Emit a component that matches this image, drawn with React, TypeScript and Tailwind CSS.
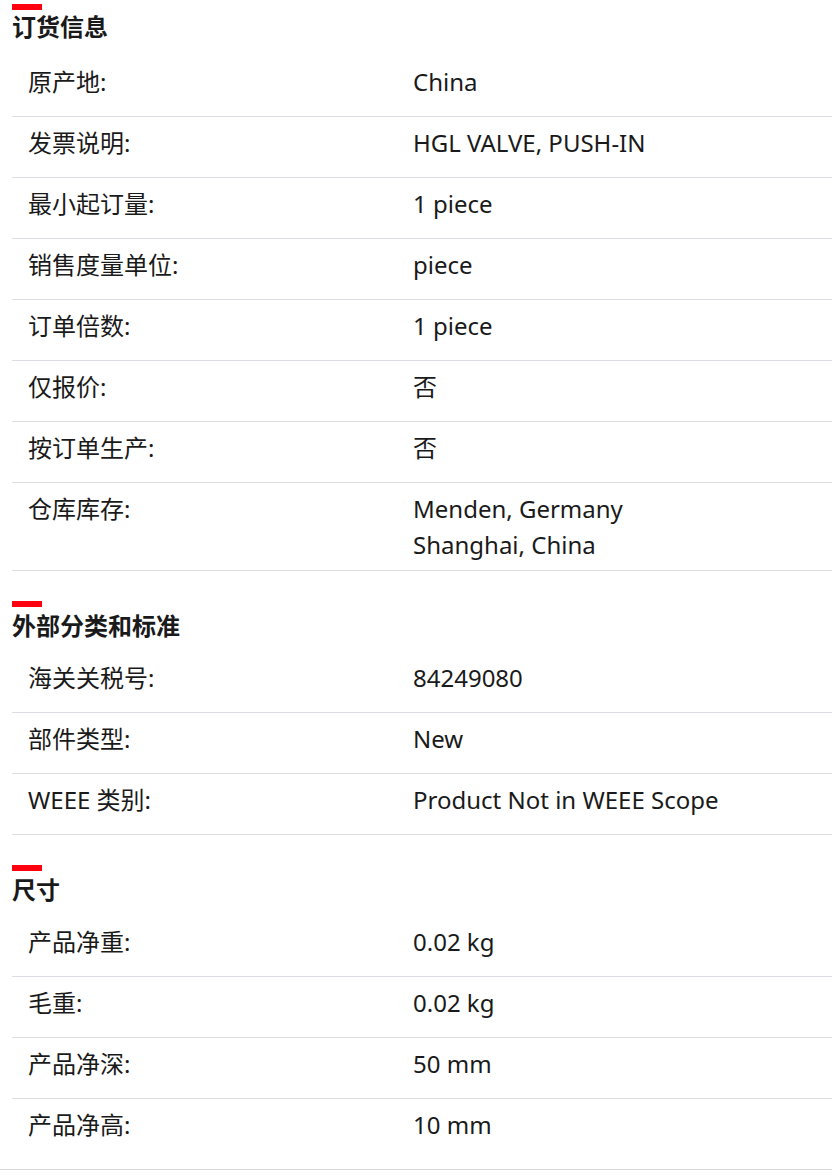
const sections = [
  {
    title: "订货信息",
    rows: [
      { label: "原产地:", value: ["China"] },
      { label: "发票说明:", value: ["HGL VALVE, PUSH-IN"] },
      { label: "最小起订量:", value: ["1 piece"] },
      { label: "销售度量单位:", value: ["piece"] },
      { label: "订单倍数:", value: ["1 piece"] },
      { label: "仅报价:", value: ["否"] },
      { label: "按订单生产:", value: ["否"] },
      { label: "仓库库存:", value: ["Menden, Germany", "Shanghai, China"] },
    ],
  },
  {
    title: "外部分类和标准",
    rows: [
      { label: "海关关税号:", value: ["84249080"] },
      { label: "部件类型:", value: ["New"] },
      { label: "WEEE 类别:", value: ["Product Not in WEEE Scope"] },
    ],
  },
  {
    title: "尺寸",
    rows: [
      { label: "产品净重:", value: ["0.02 kg"] },
      { label: "毛重:", value: ["0.02 kg"] },
      { label: "产品净深:", value: ["50 mm"] },
      { label: "产品净高:", value: ["10 mm"] },
    ],
  },
];

const font = {
  fontFamily: '"Noto Sans", "Noto Sans CJK SC", sans-serif',
};

export default function App() {
  return (
    <div className="bg-white text-[#1a1a1a] w-[832px]" style={font}>
      <div className="pl-3">
        {sections.map((s, si) => (
          <section key={s.title} className={si === 0 ? "pt-[4px]" : "mt-[30px]"}>
            <div className="w-[30px] h-[6px] bg-[#ff000f]" />
            <h2
              className={
                "text-[24px] leading-[32px] font-bold " +
                (si === 0 ? "mt-[1px] mb-[13px]" : "mt-[3px] mb-[10px]")
              }
            >
              {s.title}
            </h2>
            <div>
              {s.rows.map((r, ri) => {
                const last = si === sections.length - 1 && ri === s.rows.length - 1;
                return (
                  <div
                    key={r.label}
                    className={
                      "flex min-h-[61px] pt-2 pb-[7px] pl-4 text-[24px] leading-[36px] " +
                      (last ? "" : "border-b border-[#dcdde2]")
                    }
                  >
                    <div className="w-[385px] shrink-0">{r.label}</div>
                    <div>
                      {r.value.map(v => (
                        <div key={v}>{v}</div>
                      ))}
                    </div>
                  </div>
                );
              })}
            </div>
          </section>
        ))}
      </div>
      <div className="mt-[9px] border-b border-[#d6d6d6]" />
    </div>
  );
}
